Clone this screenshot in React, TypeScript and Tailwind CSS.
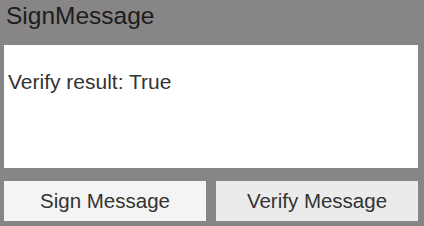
export default function App() {
  return (
    <div className="w-[424px] h-[226px] bg-[#878585] flex flex-col" style={{ fontFamily: '"Liberation Sans", Arial, sans-serif' }}>
      <div className="h-[45px] pl-[6px] pt-[1px] text-[24.5px] leading-[30px] text-[#1c1c1c]">SignMessage</div>
      <div className="mx-[4px] w-[414px] h-[123px] bg-white pl-[4px] pt-[25px] text-[21px] leading-[24px] text-[#333333]">
        Verify result: True
      </div>
      <div className="mt-[13px] flex gap-[10px] px-[4px]">
        <div className="w-[202px] h-[40px] bg-[#f4f4f4] flex items-center justify-center text-[20.5px] text-[#333333]">Sign Message</div>
        <div className="w-[202px] h-[40px] bg-[#ebebeb] flex items-center justify-center text-[20.5px] text-[#333333]">Verify Message</div>
      </div>
    </div>
  );
}
